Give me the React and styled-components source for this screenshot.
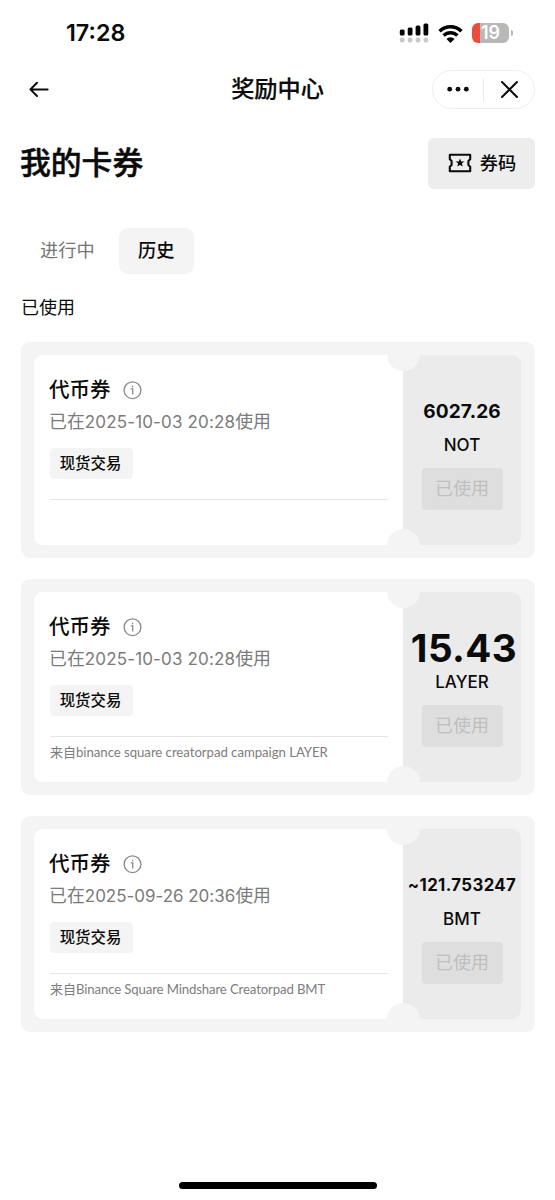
import styled, { createGlobalStyle } from 'styled-components';

const GlobalStyle = createGlobalStyle`
  * {
    box-sizing: border-box;
  }

  body {
    margin: 0;
    background-color: #fff;
    color: #0b0b0b;
    font-family: 'Inter', 'Noto Sans CJK SC', sans-serif;
  }
`;

const Screen = styled.div`
  display: flex;
  flex-direction: column;
  width: 555px;
  height: 1200px;
  overflow: hidden;
  background-color: #fff;
`;

const StatusBar = styled.div`
  display: flex;
  align-items: center;
  justify-content: space-between;
  height: 66px;
  padding: 0 42px 0 66px;
`;

const Time = styled.span`
  font-size: 23.3px;
  font-weight: 600;
  line-height: 30px;
`;

const StatusIcons = styled.div`
  display: flex;
  align-items: center;
  gap: 9px;

  svg {
    display: block;
  }
`;

const Battery = styled.div`
  display: flex;
  align-items: center;
  gap: 2px;

  &::after {
    content: '';
    width: 2px;
    height: 6px;
    border-radius: 0 2px 2px 0;
    background-color: #b5b5b5;
  }
`;

const BatteryBody = styled.div`
  width: 37px;
  height: 20px;
  border-radius: 6px;
  background: linear-gradient(to right, #eb4d3d 8px, #b8b8b8 8px);
  color: #fff;
  font-size: 18px;
  font-weight: 600;
  line-height: 20px;
  text-align: center;
`;

const NavBar = styled.header`
  display: grid;
  grid-template-columns: 103px 1fr 103px;
  align-items: center;
  height: 46px;
  padding: 0 20px 0 21px;
`;

const BackButton = styled.button`
  display: flex;
  padding: 0 0 0 7px;
  border: none;
  background: none;
`;

const NavTitle = styled.h1`
  margin: 0 0 0 -1px;
  font-size: 23.2px;
  font-weight: 500;
  line-height: 34px;
  text-align: center;
  -webkit-text-stroke: 0.2px #0b0b0b;
`;

const Capsule = styled.div`
  display: flex;
  align-items: center;
  height: 39px;
  border: 1.5px solid #eee;
  border-radius: 20px;
`;

const CapsuleButton = styled.button`
  display: flex;
  flex: 1;
  align-items: center;
  justify-content: center;
  height: 23px;
  padding: 0;
  border: none;
  background: none;

  & + & {
    border-left: 1px solid #eaeaea;
  }
`;

const PageHeader = styled.div`
  display: flex;
  align-items: center;
  justify-content: space-between;
  margin-top: 26px;
  height: 51px;
  padding: 0 20px;
`;

const PageTitle = styled.h2`
  margin: 0 0 2px;
  font-size: 30.8px;
  font-weight: 500;
  line-height: 44px;
  -webkit-text-stroke: 0.5px #0b0b0b;
`;

const CodeButton = styled.button`
  display: flex;
  align-items: center;
  justify-content: center;
  gap: 8px;
  width: 107px;
  height: 51px;
  padding: 0 0 2px 1px;
  border: none;
  border-radius: 6px;
  background-color: #ededed;
  color: #0b0b0b;
  font-family: inherit;
  font-size: 18.3px;
  font-weight: 500;
  line-height: 26px;
`;

const Tabs = styled.nav`
  display: flex;
  gap: 4px;
  margin: 39px 0 0 20px;
`;

const Tab = styled.button`
  height: 46px;
  padding: 0 ${({ $active }) => ($active ? '19.5px' : '20px')} 2px;
  border: none;
  border-radius: 9px;
  background-color: ${({ $active }) => ($active ? '#f4f4f4' : 'transparent')};
  color: ${({ $active }) => ($active ? '#0b0b0b' : '#757575')};
  font-family: inherit;
  font-size: 18.2px;
  font-weight: ${({ $active }) => ($active ? 500 : 400)};
  line-height: 26px;
`;

const SectionLabel = styled.p`
  margin: 21px 0 0 21px;
  font-size: 18px;
  line-height: 26px;
`;

const TicketList = styled.div`
  display: flex;
  flex-direction: column;
  gap: 21px;
  margin: 21px 20px 0 21px;
`;

const TicketFrame = styled.article`
  height: 216px;
  padding: 13px;
  overflow: hidden;
  border-radius: 9px;
  background-color: #f4f4f4;
`;

const Ticket = styled.div`
  position: relative;
  display: flex;
  height: 190px;
  width: 487px;
  border-radius: 9px;
`;

const TicketInfo = styled.div`
  width: 369px;
  padding: 21px 15px 0 16px;
  border-radius: 9px 0 0 9px;
  background-color: #fff;
`;

const Notch = styled.span`
  position: absolute;
  left: 353px;
  ${({ $side }) => $side}: -16px;
  width: 33px;
  height: 32px;
  border-radius: 50%;
  background-color: #f4f4f4;
`;

const TicketTitle = styled.h3`
  display: flex;
  align-items: center;
  gap: 12px;
  margin: 0 0 0 -1px;
  font-size: 20.5px;
  font-weight: 500;
  line-height: 28px;

  svg {
    margin-top: 1px;
  }
`;

const UsedAt = styled.p`
  margin: 4px 0 0 -1px;
  color: #7b7b7b;
  font-size: 17.9px;
  line-height: 28px;
  white-space: nowrap;
`;

const DateText = styled.span`
  font-size: 17px;
  letter-spacing: ${({ $spacing }) => $spacing};
`;

const Tag = styled.span`
  display: block;
  width: 83px;
  height: 31px;
  margin-top: 12px;
  padding-right: 2px;
  border-radius: 4px;
  background-color: #f4f4f4;
  font-size: 15.4px;
  font-weight: 500;
  line-height: 32px;
  text-align: center;
`;

const Note = styled.p`
  margin: 20px 0 0;
  padding-top: 5px;
  border-top: 1px solid #e6e6e6;
  color: #7d7d7d;
  font-size: 13px;
  line-height: 20px;
  white-space: nowrap;
`;

const NoteSource = styled.span`
  font-family: 'Lato', sans-serif;
  font-size: 13.2px;
  letter-spacing: ${({ $spacing }) => $spacing};
`;

const TicketValue = styled.div`
  display: flex;
  flex-direction: column;
  align-items: center;
  width: 118px;
  padding-top: 31px;
  border-radius: 0 9px 9px 0;
  background-color: #ebebeb;
`;

const Amount = styled.strong`
  padding-left: ${({ $indent }) => $indent};
  font-size: ${({ $size }) => $size};
  font-weight: 700;
  line-height: 50px;
  letter-spacing: ${({ $spacing }) => $spacing};
  white-space: nowrap;
`;

const Token = styled.span`
  margin-top: -3px;
  font-size: 17px;
  font-weight: 500;
  line-height: 24px;
`;

const UsedButton = styled.button`
  width: 81px;
  height: 42px;
  margin-top: 11px;
  padding: 0;
  border: none;
  border-radius: 4px;
  background-color: #dedede;
  color: #bebebe;
  font-family: inherit;
  font-size: 18px;
  line-height: 40px;
`;

const HomeIndicator = styled.div`
  width: 198px;
  height: 7px;
  margin: auto auto 11px 179px;
  border-radius: 4px;
  background-color: #000;
`;

const tickets = [
  {
    id: 1,
    usedAt: '2025-10-03 20:28',
    dateSpacing: '0.15px',
    amount: '6027.26',
    amountSize: '19.1px',
    amountSpacing: '0.1px',
    amountIndent: '0',
    token: 'NOT',
  },
  {
    id: 2,
    usedAt: '2025-10-03 20:28',
    dateSpacing: '0.15px',
    amount: '15.43',
    amountSize: '38.6px',
    amountSpacing: '0.4px',
    amountIndent: '4px',
    token: 'LAYER',
    source: 'binance square creatorpad campaign LAYER',
    sourceSpacing: '-0.04px',
  },
  {
    id: 3,
    usedAt: '2025-09-26 20:36',
    dateSpacing: '-0.03px',
    amount: '~121.753247',
    amountSize: '16.8px',
    amountSpacing: '0.4px',
    amountIndent: '0',
    token: 'BMT',
    source: 'Binance Square Mindshare Creatorpad BMT',
    sourceSpacing: '-0.13px',
  },
];

function SignalIcon() {
  return (
    <svg width="30" height="20" viewBox="0 0 30 20">
      {[0, 1, 2, 3].map((i) => (
        <g key={i}>
          <rect x={0.8 + i * 7.9} y={6.4 - i * 2} width="4.8" height={6 + i * 2} rx="1.5" fill="#000" />
          <rect x={0.8 + i * 7.9} y="14.6" width="4.8" height="4.8" rx="2" fill="#c9c9c9" />
        </g>
      ))}
    </svg>
  );
}

function WifiIcon() {
  return (
    <svg width="25" height="19" viewBox="0 0 25 19">
      <g fill="none" stroke="#000" strokeWidth="3.5">
        <path d="M1.6 7.2a15.6 15.6 0 0 1 21.8 0" />
        <path d="M5.6 11.6a9.8 9.8 0 0 1 13.8 0" />
      </g>
      <path d="M8.5 14.9a5.7 5.7 0 0 1 8 0l-4 4z" fill="#000" />
    </svg>
  );
}

function BackIcon() {
  return (
    <svg width="22" height="18" viewBox="0 0 22 18" fill="none" stroke="#0b0b0b" strokeWidth="2" strokeLinecap="round" strokeLinejoin="round">
      <path d="M19.6 9.4H2.6M9 2.8L2.4 9.4L9 16" />
    </svg>
  );
}

function MoreIcon() {
  return (
    <svg width="24" height="6" viewBox="0 0 24 6" fill="#0b0b0b">
      <circle cx="3.7" cy="3.2" r="2.4" />
      <circle cx="12" cy="3.2" r="2.4" />
      <circle cx="20.3" cy="3.2" r="2.4" />
    </svg>
  );
}

function CloseIcon() {
  return (
    <svg width="18" height="18" viewBox="0 0 18 18" fill="none" stroke="#0b0b0b" strokeWidth="2" strokeLinecap="round">
      <path d="M2 2l15 15M17 2l-15 15" />
    </svg>
  );
}

function CouponIcon() {
  return (
    <svg width="24" height="20" viewBox="0 0 24 20">
      <path
        d="M1.8 1.8h20.4v4.4l-1.8 1.7v4.2l1.8 1.7v4.4H1.8v-4.4l1.8-1.7V7.9L1.8 6.2z"
        fill="none"
        stroke="#0b0b0b"
        strokeWidth="2.1"
        strokeLinejoin="round"
      />
      <path d="M12 5.5l1.2 2.9 3.1.2-2.4 2 .8 3-2.7-1.7-2.7 1.7.8-3-2.4-2 3.1-.2z" fill="#0b0b0b" />
    </svg>
  );
}

function InfoIcon() {
  return (
    <svg width="19" height="19" viewBox="0 0 19 19" fill="none" stroke="#8a8a8a" strokeWidth="1.3">
      <circle cx="9.5" cy="9.2" r="8.4" />
      <path d="M7.8 7.9h1.9v5.5M9.6 4.7v1.5" />
    </svg>
  );
}

function TicketCard({ ticket }) {
  return (
    <TicketFrame>
      <Ticket>
        <TicketInfo>
          <TicketTitle>
            代币券
            <InfoIcon />
          </TicketTitle>
          <UsedAt>
            已在<DateText $spacing={ticket.dateSpacing}>{ticket.usedAt}</DateText>使用
          </UsedAt>
          <Tag>现货交易</Tag>
          <Note>
            {ticket.source && (
              <>
                来自<NoteSource $spacing={ticket.sourceSpacing}>{ticket.source}</NoteSource>
              </>
            )}
          </Note>
        </TicketInfo>
        <TicketValue>
          <Amount $size={ticket.amountSize} $spacing={ticket.amountSpacing} $indent={ticket.amountIndent}>
            {ticket.amount}
          </Amount>
          <Token>{ticket.token}</Token>
          <UsedButton>已使用</UsedButton>
        </TicketValue>
        <Notch $side="top" />
        <Notch $side="bottom" />
      </Ticket>
    </TicketFrame>
  );
}

export default function App() {
  return (
    <Screen>
      <GlobalStyle />
      <StatusBar>
        <Time>17:28</Time>
        <StatusIcons>
          <SignalIcon />
          <WifiIcon />
          <Battery>
            <BatteryBody>19</BatteryBody>
          </Battery>
        </StatusIcons>
      </StatusBar>
      <NavBar>
        <BackButton aria-label="返回">
          <BackIcon />
        </BackButton>
        <NavTitle>奖励中心</NavTitle>
        <Capsule>
          <CapsuleButton>
            <MoreIcon />
          </CapsuleButton>
          <CapsuleButton>
            <CloseIcon />
          </CapsuleButton>
        </Capsule>
      </NavBar>
      <PageHeader>
        <PageTitle>我的卡券</PageTitle>
        <CodeButton>
          <CouponIcon />
          券码
        </CodeButton>
      </PageHeader>
      <Tabs>
        <Tab>进行中</Tab>
        <Tab $active>历史</Tab>
      </Tabs>
      <SectionLabel>已使用</SectionLabel>
      <TicketList>
        {tickets.map((ticket) => (
          <TicketCard key={ticket.id} ticket={ticket} />
        ))}
      </TicketList>
      <HomeIndicator />
    </Screen>
  );
}
